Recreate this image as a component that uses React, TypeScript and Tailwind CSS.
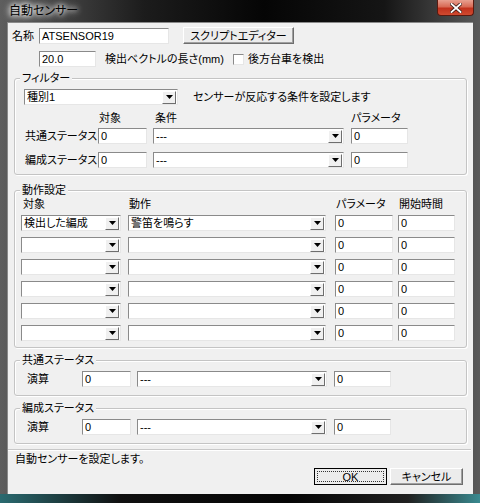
import React from "react";

const font = "font-['Liberation_Sans','Noto_Sans_CJK_JP',sans-serif] [font-feature-settings:'palt'] text-[11px] leading-[14px] text-black";

const TextBox = ({ className, value }: { className: string; value?: string }) => (
  <div
    className={`${className} h-[16px] bg-white border-t border-l border-t-[#8a8a8a] border-l-[#8a8a8a] border-b border-r border-b-[#e6e6e6] border-r-[#e6e6e6] pl-[2px] flex items-center overflow-hidden whitespace-nowrap`}
  >
    {value}
  </div>
);

const Combo = ({ className, value }: { className: string; value?: string }) => (
  <div
    className={`${className} h-[16px] bg-white border-t border-l border-t-[#8a8a8a] border-l-[#8a8a8a] border-b border-r border-b-[#e6e6e6] border-r-[#e6e6e6] flex items-center justify-between overflow-hidden whitespace-nowrap`}
  >
    <span className="pl-[2px]">{value}</span>
    <div className="w-[14px] h-[13px] mr-[1px] bg-[#f0f0f0] border-t border-l border-t-[#fff] border-l-[#fff] border-b border-r border-b-[#6e6e6e] border-r-[#6e6e6e] flex items-center justify-center">
      <svg width="7" height="4" viewBox="0 0 7 4">
        <path d="M0 0h7L3.5 4z" fill="#000" />
      </svg>
    </div>
  </div>
);

const Group = ({ title, className, children }: { title: string; className: string; children: React.ReactNode }) => (
  <div className={`${className} relative mx-[6px] border border-[#c4c4c4] rounded-[3px] shadow-[inset_1px_1px_0_#fff,1px_1px_0_#fff]`}>
    <span className="absolute -top-[8px] left-[5px] px-[2px] bg-[#f0f0f0]">{title}</span>
    {children}
  </div>
);

const actions = [
  { target: "検出した編成", action: "警笛を鳴らす" },
  { target: "", action: "" },
  { target: "", action: "" },
  { target: "", action: "" },
  { target: "", action: "" },
  { target: "", action: "" },
];

export default function App() {
  return (
    <div className={`${font} w-[480px] h-[503px] overflow-hidden flex flex-col bg-[linear-gradient(90deg,#5e5e5e_0%,#1c1c1c_30%,#050505_55%,#151515_80%,#5a5a5a_100%)]`}>
      {/* title bar */}
      <div className="h-[22px] flex items-start justify-between">
        <span className="mt-[4px] ml-[7px] px-[2px] text-[12px] [text-shadow:0_0_5px_#fff,0_0_7px_#fff,0_0_9px_#ddd]">自動センサー</span>
        <div className="mr-[6px] w-[37px] h-[16px] rounded-b-[4px] border border-t-0 border-[#5a1a10] bg-[linear-gradient(180deg,#e8a090_0%,#d86a55_45%,#c2321d_55%,#d04a30_100%)] flex items-center justify-center">
          <svg width="12" height="10" viewBox="0 0 12 10">
            <path d="M1.5 1l9 8M10.5 1l-9 8" stroke="#3a1a15" strokeWidth="3.4" strokeLinecap="square" />
            <path d="M1.5 1l9 8M10.5 1l-9 8" stroke="#fff" strokeWidth="1.8" strokeLinecap="square" />
          </svg>
        </div>
      </div>

      {/* client */}
      <div className="ml-[7px] w-[466px] h-[472px] bg-[#f0f0f0] border-t border-l border-[#8a8a8a] flex flex-col">
        <div className="mt-[4px] ml-[4px] flex items-center">
          <span className="w-[27px]">名称</span>
          <TextBox className="w-[130px]" value="ATSENSOR19" />
          <div className="ml-[14px] w-[111px] h-[17px] bg-[#ececec] border-t border-l border-t-white border-l-white border-b border-r border-b-[#6e6e6e] border-r-[#6e6e6e] shadow-[inset_-1px_-1px_0_#a0a0a0] flex items-center justify-center">
            スクリプトエディター
          </div>
        </div>

        <div className="mt-[7px] ml-[31px] flex items-center">
          <TextBox className="w-[57px]" value="20.0" />
          <span className="ml-[9px] w-[128px] whitespace-nowrap">検出ベクトルの長さ(mm)</span>
          <div className="w-[11px] h-[11px] bg-white border-t border-l border-t-[#8a8a8a] border-l-[#8a8a8a] border-b border-r border-b-[#e6e6e6] border-r-[#e6e6e6]" />
          <span className="ml-[4px]">後方台車を検出</span>
        </div>

        {/* filter */}
        <Group title="フィルター" className="mt-[11px] h-[97px]">
          <div className="mt-[10px] ml-[9px] flex items-center">
            <Combo className="w-[154px]" value="種別1" />
            <span className="ml-[15px]">センサーが反応する条件を設定します</span>
          </div>
          <div className="mt-[6px] ml-[84px] flex">
            <span className="w-[56px]">対象</span>
            <span className="w-[196px]">条件</span>
            <span>パラメータ</span>
          </div>
          {["共通ステータス", "編成ステータス"].map((label, i) => (
            <div key={label} className={`${i === 0 ? "mt-[3px]" : "mt-[8px]"} ml-[10px] flex items-center`}>
              <span className="w-[73px] whitespace-nowrap">{label}</span>
              <TextBox className="w-[49px]" value="0" />
              <Combo className="ml-[6px] w-[191px]" value="---" />
              <TextBox className="ml-[7px] w-[57px]" value="0" />
            </div>
          ))}
        </Group>

        {/* actions */}
        <Group title="動作設定" className="mt-[15px] h-[158px]">
          <div className="mt-[6px] ml-[8px] flex">
            <span className="w-[106px]">対象</span>
            <span className="w-[207px]">動作</span>
            <span className="w-[63px]">パラメータ</span>
            <span>開始時間</span>
          </div>
          <div className="mt-[4px] ml-[6px] flex flex-col gap-[6px]">
            {actions.map((row, i) => (
              <div key={i} className="flex items-center">
                <Combo className="w-[100px]" value={row.target} />
                <Combo className="ml-[7px] w-[198px]" value={row.action} />
                <TextBox className="ml-[9px] w-[58px]" value="0" />
                <TextBox className="ml-[5px] w-[57px]" value="0" />
              </div>
            ))}
          </div>
        </Group>

        {["共通ステータス", "編成ステータス"].map((title) => (
          <Group key={title} title={title} className="mt-[12px] h-[36px]">
            <div className="mt-[10px] ml-[12px] flex items-center">
              <span className="w-[55px]">演算</span>
              <TextBox className="w-[49px]" value="0" />
              <Combo className="ml-[6px] w-[190px]" value="---" />
              <TextBox className="ml-[7px] w-[57px]" value="0" />
            </div>
          </Group>
        ))}

        <div className="mt-[5px] w-[463px] border-t border-b border-t-[#c8c8c8] border-b-white" />

        <span className="mt-[1px] ml-[7px]">自動センサーを設定します。</span>

        <div className="mt-[2px] mr-[10px] flex justify-end gap-[3px]">
          <div className="w-[73px] h-[17px] bg-[#ececec] border border-black p-[2px]">
            <div className="h-full border border-dotted border-[#333] flex items-center justify-center">OK</div>
          </div>
          <div className="w-[73px] h-[17px] bg-[#ececec] border-t border-l border-t-white border-l-white border-b border-r border-b-[#6e6e6e] border-r-[#6e6e6e] shadow-[inset_-1px_-1px_0_#a0a0a0] flex items-center justify-center">
            キャンセル
          </div>
        </div>
      </div>
      <div className="flex-1 bg-[linear-gradient(90deg,#2a6a70_0%,#101010_25%,#050505_60%,#202020_85%,#3a8a90_100%)]" />
    </div>
  );
}
